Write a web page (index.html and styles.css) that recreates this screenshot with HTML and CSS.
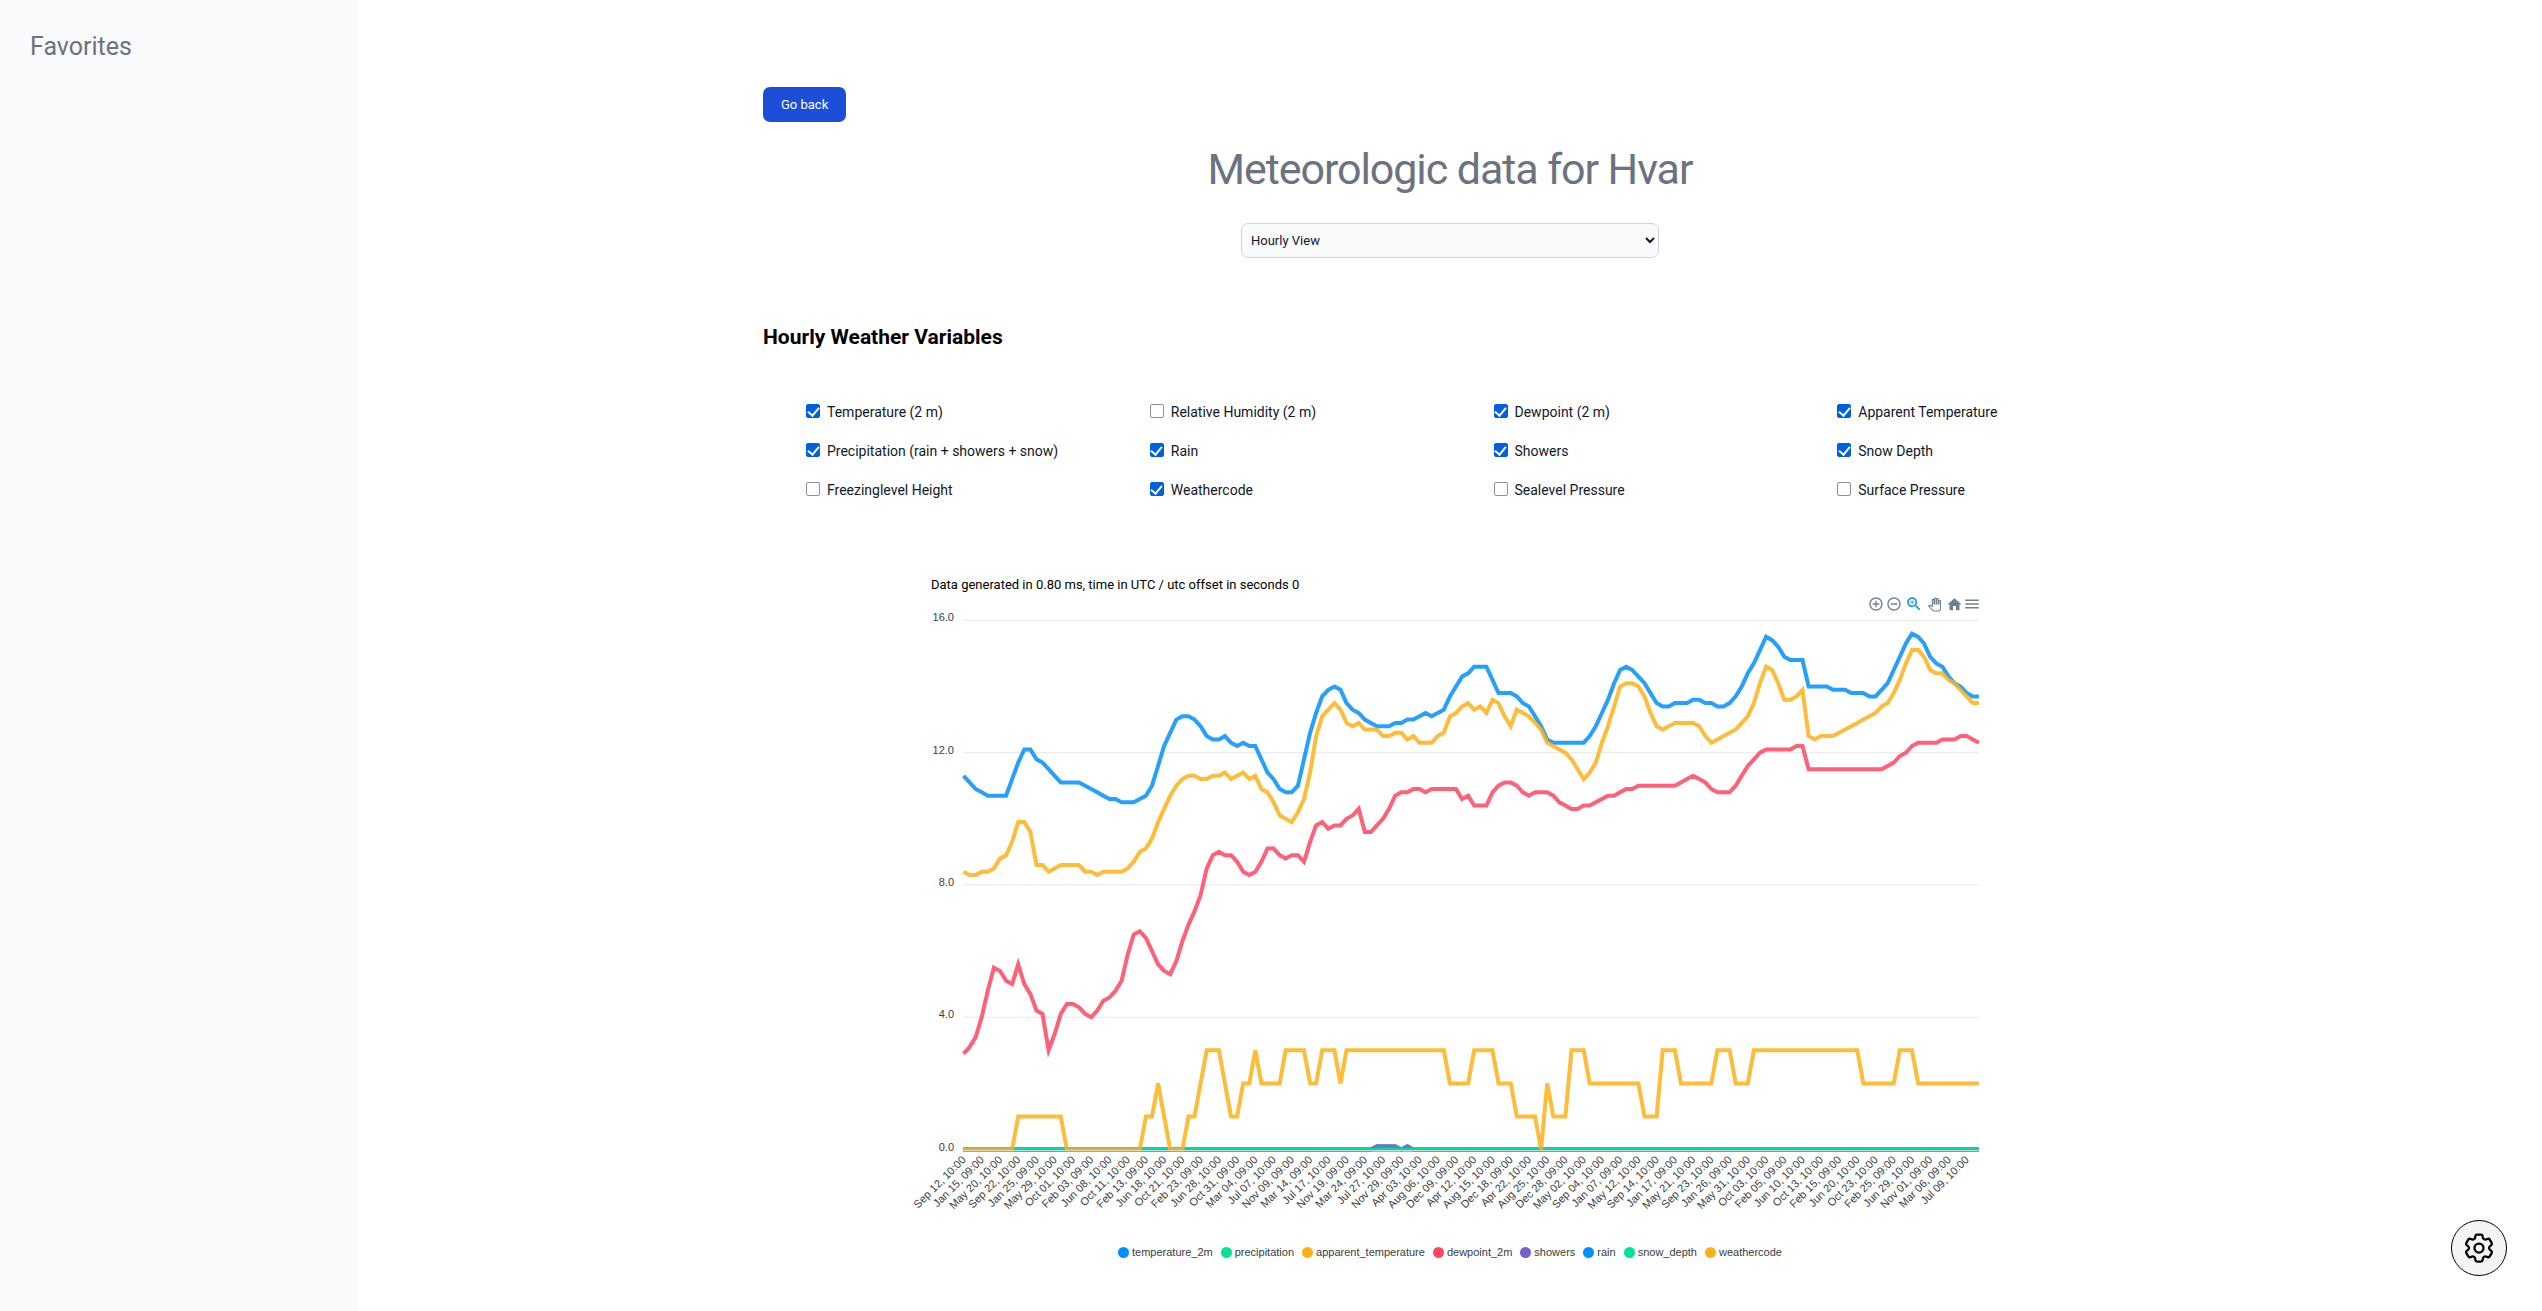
FILE: index.html
```html
<!DOCTYPE html>
<html lang="en">
<head>
<meta charset="utf-8">
<meta name="viewport" content="width=device-width, initial-scale=1">
<title>Meteorologic data for Hvar</title>
<link rel="stylesheet" href="styles.css">
</head>
<body>
<div class="layout">
  <aside class="sidebar">
    <h2 class="sidebar-title">Favorites</h2>
  </aside>
  <main class="main">
    <div class="content">
      <button type="button" class="back-button">Go back</button>
      <h1 class="page-title">Meteorologic data for Hvar</h1>
      <select class="view-select" aria-label="View">
        <option selected>Hourly View</option>
        <option>Daily View</option>
      </select>

      <h2 class="section-title">Hourly Weather Variables</h2>
      <div class="variables">
        <label class="variable"><input type="checkbox" checked>Temperature (2 m)</label>
        <label class="variable"><input type="checkbox">Relative Humidity (2 m)</label>
        <label class="variable"><input type="checkbox" checked>Dewpoint (2 m)</label>
        <label class="variable"><input type="checkbox" checked>Apparent Temperature</label>
        <label class="variable"><input type="checkbox" checked>Precipitation (rain + showers + snow)</label>
        <label class="variable"><input type="checkbox" checked>Rain</label>
        <label class="variable"><input type="checkbox" checked>Showers</label>
        <label class="variable"><input type="checkbox" checked>Snow Depth</label>
        <label class="variable"><input type="checkbox">Freezinglevel Height</label>
        <label class="variable"><input type="checkbox" checked>Weathercode</label>
        <label class="variable"><input type="checkbox">Sealevel Pressure</label>
        <label class="variable"><input type="checkbox">Surface Pressure</label>
      </div>

      <figure class="chart">
        <figcaption class="chart-caption">Data generated in 0.80 ms, time in UTC / utc offset in seconds 0</figcaption>
        <div class="toolbar">
          <div class="tool-group">
            <button type="button" class="tool" aria-label="Zoom in"><svg width="16" height="16" viewBox="0 0 24 24"><path d="M13 7h-2v4H7v2h4v4h2v-4h4v-2h-4V7zm-1-5C6.48 2 2 6.48 2 12s4.48 10 10 10 10-4.48 10-10S17.52 2 12 2zm0 18c-4.41 0-8-3.59-8-8s3.59-8 8-8 8 3.59 8 8-3.59 8-8 8z"/></svg></button>
            <button type="button" class="tool" aria-label="Zoom out"><svg width="16" height="16" viewBox="0 0 24 24"><path d="M7 11v2h10v-2H7zm5-9C6.48 2 2 6.48 2 12s4.48 10 10 10 10-4.48 10-10S17.52 2 12 2zm0 18c-4.41 0-8-3.59-8-8s3.59-8 8-8 8 3.59 8 8-3.59 8-8 8z"/></svg></button>
          </div>
          <button type="button" class="tool tool-active" aria-label="Selection zoom"><svg width="18" height="18" viewBox="0 0 24 24"><path d="M15.5 14h-.79l-.28-.27C15.41 12.59 16 11.11 16 9.5 16 5.91 13.09 3 9.5 3S3 5.91 3 9.5 5.91 16 9.5 16c1.61 0 3.09-.59 4.23-1.57l.27.28v.79l5 4.99L20.49 19l-4.99-5zm-6 0C7.01 14 5 11.99 5 9.5S7.01 5 9.5 5 14 7.01 14 9.5 11.99 14 9.5 14z"/><path d="M12 10h-2v2H9v-2H7V9h2V7h1v2h2v1z"/></svg></button>
          <button type="button" class="tool tool-pan" aria-label="Panning"><svg width="13" height="13" viewBox="0 0 24 24"><path d="M23 5.5V20c0 2.2-1.8 4-4 4h-7.3c-1.08 0-2.1-.43-2.85-1.19L1 14.83s1.26-1.23 1.3-1.25c.22-.19.49-.29.79-.29.22 0 .42.06.6.16.04.01 4.31 2.46 4.31 2.46V4c0-.83.67-1.5 1.5-1.5S11 3.17 11 4v7h1V1.5c0-.83.67-1.5 1.5-1.5S15 .67 15 1.5V11h1V2.5c0-.83.67-1.5 1.5-1.5s1.5.67 1.5 1.5V11h1V5.5c0-.83.67-1.5 1.5-1.5s1.5.67 1.5 1.5z"/></svg></button>
          <div class="tool-group">
            <button type="button" class="tool" aria-label="Reset zoom"><svg width="17" height="17" viewBox="0 0 24 24"><path d="M10 20v-6h4v6h5v-8h3L12 3 2 12h3v8z"/></svg></button>
            <button type="button" class="tool" aria-label="Menu"><svg width="18" height="18" viewBox="0 0 24 24"><path d="M3 18h18v-2H3v2zm0-5h18v-2H3v2zm0-7v2h18V6H3z"/></svg></button>
          </div>
        </div>
        <svg id="plot" class="plot" viewBox="0 0 1080 600" role="img" aria-label="Hourly weather chart"></svg>
        <ul class="legend">
          <li class="legend-item blue">temperature_2m</li>
          <li class="legend-item green">precipitation</li>
          <li class="legend-item orange">apparent_temperature</li>
          <li class="legend-item red">dewpoint_2m</li>
          <li class="legend-item purple">showers</li>
          <li class="legend-item blue">rain</li>
          <li class="legend-item green">snow_depth</li>
          <li class="legend-item orange">weathercode</li>
        </ul>
      </figure>
    </div>
  </main>
</div>
<button type="button" class="settings-button" aria-label="Settings">
  <svg width="36" height="36" viewBox="0 0 24 24" fill="none" stroke="currentColor" stroke-width="1.5" stroke-linecap="round" stroke-linejoin="round"><path d="M9.594 3.94c.09-.542.56-.94 1.11-.94h2.593c.55 0 1.02.398 1.11.94l.213 1.281c.063.374.313.686.645.87.074.04.147.083.22.127.324.196.72.257 1.075.124l1.217-.456a1.125 1.125 0 011.37.49l1.296 2.247a1.125 1.125 0 01-.26 1.431l-1.003.827c-.293.24-.438.613-.431.992a6.759 6.759 0 010 .255c-.007.378.138.75.43.99l1.005.828c.424.35.534.954.26 1.43l-1.298 2.247a1.125 1.125 0 01-1.369.491l-1.217-.456c-.355-.133-.75-.072-1.076.124a6.57 6.57 0 01-.22.128c-.331.183-.581.495-.644.869l-.213 1.28c-.09.543-.56.941-1.11.941h-2.594c-.55 0-1.02-.398-1.11-.94l-.213-1.281c-.062-.374-.312-.686-.644-.87a6.52 6.52 0 01-.22-.127c-.325-.196-.72-.257-1.076-.124l-1.217.456a1.125 1.125 0 01-1.369-.49l-1.297-2.247a1.125 1.125 0 01.26-1.431l1.004-.827c.292-.24.437-.613.43-.992a6.932 6.932 0 010-.255c.007-.378-.138-.75-.43-.99l-1.004-.828a1.125 1.125 0 01-.26-1.43l1.297-2.247a1.125 1.125 0 011.37-.491l1.216.456c.356.133.751.072 1.076-.124.072-.044.146-.087.22-.128.332-.183.582-.495.644-.869l.214-1.281z"/><path d="M15 12a3 3 0 11-6 0 3 3 0 016 0z"/></svg>
</button>
<script src="chart.js"></script>
</body>
</html>
```
FILE: styles.css
```css
* { box-sizing: border-box; }

body {
  margin: 0;
  font-family: Roboto, "Liberation Sans", sans-serif;
  font-size: 14px;
  color: #111827;
  background: #fff;
}

h1, h2, figure, ul { margin: 0; padding: 0; }
button, select, input { font: inherit; margin: 0; }

.layout {
  display: grid;
  grid-template-columns: 358px minmax(0, 1fr);
  min-height: 100vh;
}

.sidebar {
  background: #f9fafc;
  padding: 30px;
}

.sidebar-title {
  font-size: 25px;
  line-height: 34px;
  font-weight: 400;
  color: #6b7280;
}

.main { padding: 87px 24px 32px; }

.content {
  display: flex;
  flex-direction: column;
  max-width: 1374px;
  margin: 0 auto;
}

.back-button {
  align-self: flex-start;
  padding: 0 18px;
  border: 0;
  border-radius: 7px;
  background: #1d4ed8;
  color: #fff;
  font-size: 13px;
  font-weight: 400;
  line-height: 35px;
}

.page-title {
  margin-top: 23px;
  font-size: 43px;
  line-height: 48px;
  font-weight: 400;
  letter-spacing: -0.025em;
  text-align: center;
  color: #6b7280;
}

.view-select {
  align-self: center;
  width: 100%;
  max-width: 418px;
  height: 35px;
  margin-top: 30px;
  padding: 0 5px;
  border: 1px solid #d1d5db;
  border-radius: 7px;
  background: #f9fafc;
  color: #111827;
  font-size: 13px;
}

.section-title {
  margin-top: 64px;
  font-size: 21px;
  line-height: 30px;
  font-weight: 700;
  color: #000;
}

.variables {
  display: grid;
  grid-template-columns: repeat(4, minmax(0, 1fr));
  grid-auto-rows: 39px;
  margin: 40px -44px 0 43px;
}

.variable {
  display: flex;
  align-items: center;
  gap: 7px;
}

.variable input {
  appearance: none;
  display: grid;
  place-items: center;
  width: 14px;
  height: 14px;
  margin-bottom: 2px;
  border: 1px solid #8f8f9d;
  border-radius: 2px;
  background: #fff;
}

.variable input:checked {
  border-color: #0060df;
  background: #0060df;
}

.variable input:checked::before {
  content: "";
  width: 5px;
  height: 9px;
  margin-bottom: 2px;
  border: solid #fff;
  border-width: 0 2px 2px 0;
  transform: rotate(40deg);
}

.chart {
  width: 100%;
  max-width: 1080px;
  margin: 66px auto 0;
}

.chart-caption {
  padding-left: 21px;
  font-size: 13px;
  line-height: 20px;
  color: #000;
}

.toolbar {
  display: flex;
  justify-content: flex-end;
  gap: 2px;
  padding-right: 9px;
}

.tool-group { display: flex; }

.tool {
  display: grid;
  place-items: center;
  width: 18px;
  height: 18px;
  padding: 0;
  border: 0;
  background: none;
  fill: #6e8192;
}

.tool-active { fill: #008ffb; }

.tool-pan { fill: none; stroke: #6e8192; stroke-width: 2; }
.tool-pan svg { overflow: visible; }

.plot {
  display: block;
  width: 100%;
  overflow: visible;
  font-family: "Liberation Sans", Arial, sans-serif;
  font-size: 11px;
  fill: #373d3f;
}

.grid-line { stroke: #e7e7e7; }
.axis-line { stroke: #e0e0e0; opacity: 0.85; }

.series {
  fill: none;
  stroke-width: 4;
  opacity: 0.85;
}

.legend {
  display: flex;
  flex-wrap: wrap;
  justify-content: center;
  gap: 8px;
  margin-top: 31px;
  list-style: none;
  font-family: "Liberation Sans", Arial, sans-serif;
  font-size: 11px;
  line-height: 16px;
  color: #373d3f;
}

.legend-item {
  display: flex;
  align-items: center;
  gap: 3px;
}

.legend-item::before {
  content: "";
  width: 11px;
  height: 11px;
  border-radius: 50%;
  background: currentColor;
}

.blue::before { background: #008ffb; }
.green::before { background: #00e396; }
.orange::before { background: #feb019; }
.red::before { background: #ff4560; }
.purple::before { background: #775dd0; }

.settings-button {
  position: fixed;
  right: 35px;
  bottom: 35px;
  display: grid;
  place-items: center;
  width: 56px;
  height: 56px;
  padding: 0;
  border: 1px solid #000;
  border-radius: 50%;
  background: #f3f4f6;
  color: #000;
}
```
FILE: chart.js
```js
const LEFT = 53.5, STEP = 6.08, BASE = 536.5, UNIT = 33.07, HOURS = 168;

// Runs are written as "value*count"; a bare value stands for one hour.
const parse = (text) => text.trim().split(/\s+/).flatMap((token) => {
  const [value, count] = token.split("*");
  return Array(Number(count || 1)).fill(Number(value));
});

const temperature = parse(`
  11.3 11.1 10.9 10.8 10.7*4 11.2 11.7 12.1 12.1 11.8 11.7 11.5 11.3 11.1*4 11 10.9 10.8 10.7 10.6 10.6
  10.5*3 10.6 10.7 11 11.6 12.2 12.6 13 13.1 13.1 13 12.8 12.5 12.4 12.4 12.5 12.3 12.2 12.3 12.2 12.2
  11.8 11.4 11.2 10.9 10.8 10.8 11 11.8 12.6 13.2 13.7 13.9 14 13.9 13.5 13.3 13.2 13 12.9 12.8*3
  12.9 12.9 13 13 13.1 13.2 13.1 13.2 13.3 13.7 14 14.3 14.4 14.6*3 14.2 13.8*3 13.7 13.5 13.4 13.1 12.8
  12.4 12.3*6 12.5 12.8 13.2 13.6 14.1 14.5 14.6 14.5 14.3 14.1 13.8 13.5 13.4 13.4 13.5*3 13.6 13.6
  13.5 13.5 13.4 13.4 13.5 13.7 14 14.4 14.7 15.1 15.5 15.4 15.2 14.9 14.8*3 14*4 13.9*3 13.8*3 13.7 13.7
  13.9 14.1 14.5 14.9 15.3 15.6 15.5 15.3 14.9 14.7 14.6 14.3 14.1 14 13.8 13.7 13.7`);

const apparent = parse(`
  8.4 8.3 8.3 8.4 8.4 8.5 8.8 8.9 9.3 9.9 9.9 9.6 8.6 8.6 8.4 8.5 8.6*4 8.4 8.4 8.3 8.4*4 8.5 8.7 9 9.1
  9.4 9.9 10.3 10.7 11 11.2 11.3 11.3 11.2 11.2 11.3 11.3 11.4 11.2 11.3 11.4 11.2 11.3 10.9 10.8 10.5
  10.1 10 9.9 10.2 10.6 11.4 12.5 13.1 13.3 13.5 13.3 12.9 12.8 12.9 12.7*3 12.5 12.5 12.6 12.6 12.4 12.5
  12.3*3 12.5 12.6 13.1 13.2 13.4 13.5 13.3 13.4 13.2 13.6 13.5 13.1 12.8 13.3 13.2 13.1 12.9 12.7 12.3
  12.2 12.1 12 11.8 11.5 11.2 11.4 11.7 12.3 12.8 13.4 14 14.1 14.1 14 13.7 13.2 12.8 12.7 12.8 12.9*4
  12.8 12.5 12.3 12.4 12.5 12.6 12.7 12.9 13.1 13.5 14.1 14.6 14.5 14.1 13.6 13.6 13.7 13.9 12.5 12.4
  12.5*3 12.6 12.7 12.8 12.9 13 13.1 13.2 13.4 13.5 13.8 14.2 14.7 15.1 15.1 14.9 14.5 14.4 14.4 14.2
  14.1 13.9 13.7 13.5 13.5`);

const dewpoint = parse(`
  2.9 3.1 3.4 4 4.8 5.5 5.4 5.1 5 5.6 5 4.7 4.2 4.1 3 3.5 4.1 4.4 4.4 4.3 4.1 4 4.2 4.5 4.6 4.8 5.1 5.9
  6.5 6.6 6.4 6 5.6 5.4 5.3 5.7 6.3 6.8 7.2 7.7 8.5 8.9 9 8.9 8.9 8.7 8.4 8.3 8.4 8.7 9.1 9.1 8.9 8.8
  8.9 8.9 8.7 9.3 9.8 9.9 9.7 9.8 9.8 10 10.1 10.3 9.6 9.6 9.8 10 10.3 10.7 10.8 10.8 10.9 10.9 10.8
  10.9*5 10.6 10.7 10.4*3 10.8 11 11.1 11.1 11 10.8 10.7 10.8*3 10.7 10.5 10.4 10.3 10.3 10.4 10.4 10.5
  10.6 10.7 10.7 10.8 10.9 10.9 11*7 11.1 11.2 11.3 11.2 11.1 10.9 10.8*3 11 11.3 11.6 11.8 12 12.1*5
  12.2 12.2 11.5*13 11.6 11.7 11.9 12 12.2 12.3*4 12.4*3 12.5 12.5 12.4 12.3`);

const weathercode = parse(`
  0*9 1*8 0*13 1 1 2 1 0*3 1 1 2 3*3 2 1 1 2 2 3 2*4 3*4 2 2 3*3 2 3*17 2*4 3*4 2*3 1*4 0 2 1*3 3*3
  2*9 1*3 3*3 2*6 3*3 2*3 3*18 2*6 3*3 2*11`);

const wet = parse("0*68 0.1*4 0 0.1 0*94");
const dry = parse("0*168");

const series = [
  [temperature, "#008ffb"], [wet, "#00e396"], [apparent, "#feb019"], [dewpoint, "#ff4560"],
  [wet, "#775dd0"], [dry, "#008ffb"], [dry, "#00e396"], [weathercode, "#feb019"],
];

// Every third hour is labelled; a star marks the 09:00 ones, the others read 10:00.
const labels = `Sep 12|Jan 15*|May 20|Sep 22|Jan 25*|May 29|Oct 01|Feb 03*|Jun 08|Oct 11|Feb 13*|Jun 18|Oct 21|Feb 23*|Jun 28|Oct 31*|Mar 04*|Jul 07|Nov 09*|Mar 14*|Jul 17|Nov 19*|Mar 24*|Jul 27|Nov 29*|Apr 03|Aug 06|Dec 09*|Apr 12|Aug 15|Dec 18*|Apr 22|Aug 25|Dec 28*|May 02|Sep 04|Jan 07*|May 12|Sep 14|Jan 17*|May 21|Sep 23|Jan 26*|May 31|Oct 03|Feb 05*|Jun 10|Oct 13|Feb 15*|Jun 20|Oct 23|Feb 25*|Jun 29|Nov 01*|Mar 06*|Jul 09`.split("|");

const x = (hour) => (LEFT + hour * STEP).toFixed(1);
const y = (value) => (BASE - value * UNIT).toFixed(1);
const right = x(HOURS - 1);
const parts = [];

for (const tick of [0, 4, 8, 12, 16]) {
  const line = Number(y(tick));
  parts.push(`<line class="grid-line" x1="${LEFT}" x2="${right}" y1="${line}" y2="${line}"/>`);
  parts.push(`<text x="44" y="${Math.round(line) + 1}" text-anchor="end">${tick.toFixed(1)}</text>`);
}

for (const [values, color] of series) {
  const points = values.map((value, hour) => `${x(hour)},${y(value)}`).join(" ");
  parts.push(`<polyline class="series" stroke="${color}" points="${points}"/>`);
}

parts.push(`<line class="axis-line" x1="${LEFT}" x2="${right}" y1="${BASE + 1}" y2="${BASE + 1}"/>`);

labels.forEach((label, i) => {
  const text = label.endsWith("*") ? `${label.slice(0, -1)}, 09:00` : `${label}, 10:00`;
  const tx = (Number(x(i * 3)) + 3).toFixed(1), ty = BASE + 11;
  parts.push(`<text x="${tx}" y="${ty}" text-anchor="end" transform="rotate(-45 ${tx} ${ty})">${text}</text>`);
});

document.getElementById("plot").innerHTML = parts.join("");
```
